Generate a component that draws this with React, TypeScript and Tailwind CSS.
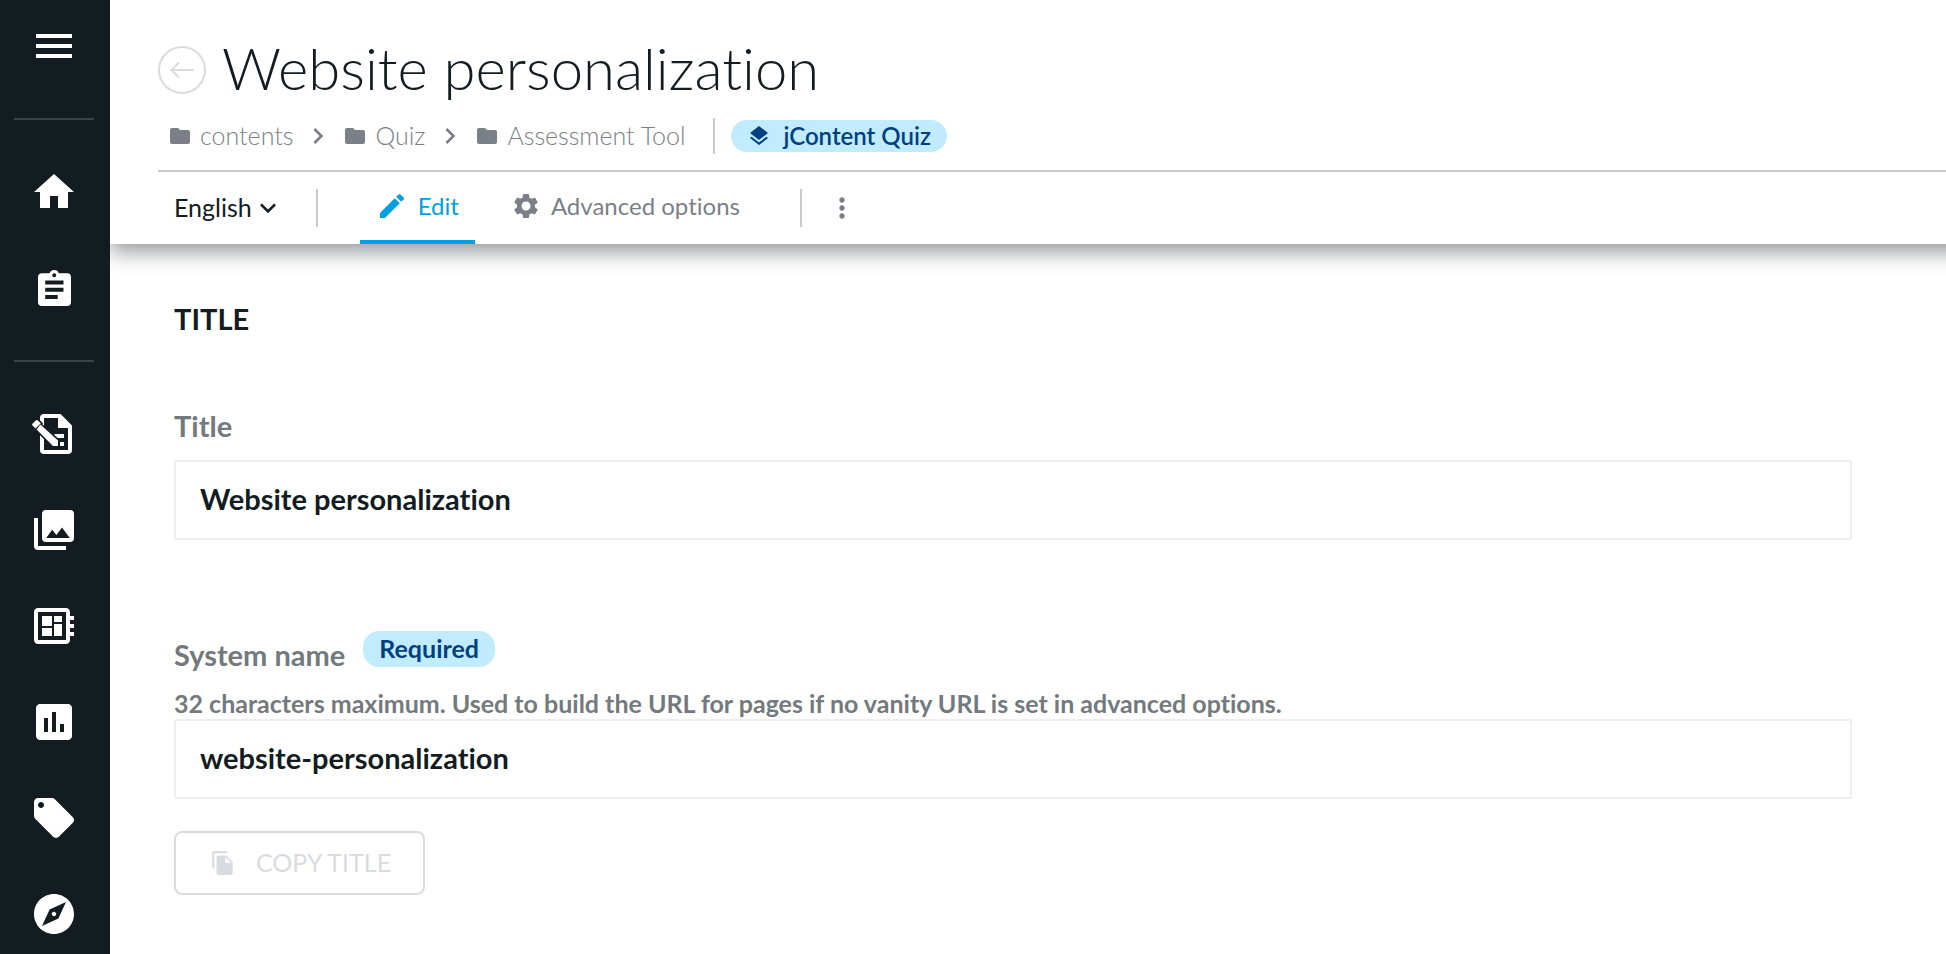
import type { ReactNode } from "react";
import {
  MdAssessment,
  MdChevronRight,
  MdDeveloperBoard,
  MdEdit,
  MdExpandMore,
  MdExplore,
  MdFileCopy,
  MdFolder,
  MdHome,
  MdLayers,
  MdMenu,
  MdMoreVert,
  MdSettings,
} from "react-icons/md";

function ClipboardIcon() {
  return (
    <svg viewBox="0 0 48 48" className="size-12" fill="currentColor" aria-hidden="true">
      <path
        fillRule="evenodd"
        d="M12 9.2h7.6a4.9 4.9 0 0 1 9.2 0H37a4 4 0 0 1 4 4V38a4 4 0 0 1-4 4H12a4 4 0 0 1-4-4V13.200a4 4 0 0 1 4-4zM24.200 9.300a2 2 0 1 0 0 4a2 2 0 0 0 0-4zM15.200 16.500v4h18.300v-4zM15.200 23.700v4h18.300v-4zM15.200 31v4h12.500v-4z"
      />
    </svg>
  );
}

function EditNoteIcon() {
  return (
    <svg viewBox="0 0 24 24" className="size-12" aria-hidden="true">
      <path
        fill="currentColor"
        fillRule="evenodd"
        d="M7 2h8.300L21 7.700V20a2 2 0 0 1-2 2H7a2 2 0 0 1-2-2V4a2 2 0 0 1 2-2zM7 4v16h12V9h-5V4z"
      />
      <path fill="currentColor" d="M12.200 12H17v2h-4.800zM15 16h2v2h-2z" />
      <path
        className="fill-white stroke-[#131c21]"
        strokeWidth="1.600"
        paintOrder="stroke"
        d="M5.200 7.300L14 15.200V18h-2.500L3.300 9.800zM3.400 5a1 1 0 0 1 .5.2L5.400 6.600L2.800 9.300L1.300 7.900a.8.8 0 0 1 0-1.100L2.900 5.200a1 1 0 0 1 .5-.2z"
      />
    </svg>
  );
}

function MediaIcon() {
  return (
    <svg viewBox="0 0 24 24" className="size-12" fill="currentColor" aria-hidden="true">
      <path d="M2 6v14a2 2 0 0 0 2 2h14v-2H4V6z" />
      <path
        fillRule="evenodd"
        d="M8 2h12a2 2 0 0 1 2 2v12a2 2 0 0 1-2 2H8a2 2 0 0 1-2-2V4a2 2 0 0 1 2-2zM8.100 16h11.800l-3.900-5.200l-2.800 3.700l-2.100-2.600z"
      />
    </svg>
  );
}

function TagIcon() {
  return (
    <svg viewBox="0 0 24 24" className="size-12" fill="currentColor" aria-hidden="true">
      <path d="M21.410 11.580l-9-9C12.050 2.220 11.550 2 11 2H4c-1.100 0-2 .9-2 2v7c0 .55.220 1.050.590 1.420l9 9c.360.360.860.580 1.410.580s1.050-.220 1.410-.590l7-7c.370-.360.590-.860.590-1.410s-.230-1.060-.590-1.420zM5.500 7C4.670 7 4 6.330 4 5.500S4.670 4 5.500 4 7 4.670 7 5.500 6.330 7 5.500 7z" />
    </svg>
  );
}

function ThinArrowLeft() {
  return (
    <svg viewBox="0 0 24 24" className="size-6" fill="none" stroke="currentColor" strokeWidth="2" aria-hidden="true">
      <path d="M24 12H2M9 4.500L1.500 12L9 19.500" />
    </svg>
  );
}

function NavItem({ label, children }: { label: string; children: ReactNode }) {
  return (
    <li>
      <a href="#" aria-label={label} className="flex h-24 items-center justify-center">
        {children}
      </a>
    </li>
  );
}

function Sidebar() {
  return (
    <nav
      aria-label="Main"
      className="sticky top-0 z-20 h-screen w-[110px] shrink-0 overflow-hidden bg-[#131c21] pr-0.5 text-white"
    >
      <button type="button" aria-label="Menu" className="flex h-[94px] w-full items-center justify-center pb-0.5">
        <MdMenu className="size-12" />
      </button>
      <hr className="mx-3.5 my-6 h-0.5 border-0 bg-[#3b4248]" />
      <ul>
        <NavItem label="Home">
          <MdHome className="size-12" />
        </NavItem>
        <NavItem label="Tasks">
          <ClipboardIcon />
        </NavItem>
      </ul>
      <hr className="mx-3.5 my-6 h-0.5 border-0 bg-[#3b4248]" />
      <ul>
        <NavItem label="Pages">
          <EditNoteIcon />
        </NavItem>
        <NavItem label="Media">
          <MediaIcon />
        </NavItem>
        <NavItem label="Components">
          <MdDeveloperBoard className="size-12" />
        </NavItem>
        <NavItem label="Reports">
          <MdAssessment className="size-12" />
        </NavItem>
        <NavItem label="Tags">
          <TagIcon />
        </NavItem>
        <NavItem label="Explore">
          <MdExplore className="size-12" />
        </NavItem>
      </ul>
    </nav>
  );
}

const trail = ["contents", "Quiz", "Assessment Tool"];

function Breadcrumb() {
  return (
    <nav aria-label="Breadcrumb" className="mt-4 flex h-9 items-center pl-2.5">
      <ol className="flex items-center text-[25px] font-light text-[#7b7f88]">
        {trail.map((name, i) => (
          <li key={name} className="flex items-center">
            {i > 0 && <MdChevronRight className="mx-[9px] size-8" />}
            <a href="#" className="flex items-center gap-2">
              <MdFolder className="size-6" />
              {name}
            </a>
          </li>
        ))}
      </ol>
      <span className="ml-7 mr-4 h-9 w-0.5 bg-[#c9c9cf]" />
      <span className="flex h-8 items-center gap-3 rounded-full bg-[#c1ecff] px-4 text-2xl font-semibold text-[#00407f]">
        <MdLayers className="size-6" />
        jContent Quiz
      </span>
    </nav>
  );
}

function Toolbar() {
  return (
    <div className="flex h-[74px] items-center border-t-2 border-[#c9c9cf] pl-4">
      <div className="relative flex items-center text-[25px] text-[#131c21]">
        <select aria-label="Language" className="field-sizing-content appearance-none bg-transparent pr-8 outline-none">
          <option>English</option>
        </select>
        <MdExpandMore className="pointer-events-none absolute right-0 size-8" />
      </div>
      <span className="ml-8 mr-[42px] h-[38px] w-0.5 bg-[#c9c9cf]" />
      <div role="tablist" className="flex gap-5 self-stretch text-2xl">
        <button
          type="button"
          role="tab"
          aria-selected="true"
          className="flex items-center gap-2.5 border-b-4 border-[#00a0e3] px-4 text-[#00a0e3]"
        >
          <MdEdit className="size-8" />
          Edit
        </button>
        <button
          type="button"
          role="tab"
          aria-selected="false"
          className="flex items-center gap-2.5 border-b-4 border-transparent px-4 text-[#7b7f88]"
        >
          <MdSettings className="size-[30px]" />
          Advanced options
        </button>
      </div>
      <span className="ml-11 mr-6 h-[38px] w-0.5 bg-[#c9c9cf]" />
      <button type="button" aria-label="More actions" className="text-[#7b7f88]">
        <MdMoreVert className="size-8" />
      </button>
    </div>
  );
}

function PageHeader() {
  return (
    <header className="relative z-10 -mr-6 bg-white pt-[38px] pl-12 shadow-[0_8px_20px_rgba(19,28,33,0.45)]">
      <div className="flex h-16 items-center gap-4">
        <button
          type="button"
          aria-label="Back"
          className="flex size-12 items-center justify-center rounded-full border-2 border-[#dadbe0] text-[#dadbe0]"
        >
          <ThinArrowLeft />
        </button>
        <h1 className="pb-1 text-[58px] leading-[60px] font-light text-[#131c21]">Website personalization</h1>
      </div>
      <Breadcrumb />
      <div className="h-4" />
      <Toolbar />
    </header>
  );
}

const inputClass =
  "h-20 w-full rounded-xs border-2 border-[#efefef] bg-white px-6 pb-1 text-[29px] font-bold text-[#131c21] outline-none";

function ContentForm() {
  return (
    <form className="pt-[55px] pr-[94px] pb-14 pl-16">
      <h2 className="text-[29px] leading-10 font-bold text-[#131c21]">TITLE</h2>
      <label htmlFor="title" className="mt-[67px] block text-[29px] leading-10 font-bold text-[#73797d]">
        Title
      </label>
      <input id="title" type="text" defaultValue="Website personalization" className={`mt-3.5 ${inputClass}`} />

      <div className="mt-[91px] flex items-start gap-[18px]">
        <label htmlFor="system-name" className="mt-1 text-[29px] leading-10 font-bold text-[#73797d]">
          System name
        </label>
        <span className="flex h-9 items-center rounded-2xl bg-[#c1ecff] px-4 text-[25px] font-bold text-[#00407f]">
          Required
        </span>
      </div>
      <p id="system-name-help" className="mt-3 text-[25px] leading-8 font-bold text-[#73797d]">
        32 characters maximum. Used to build the URL for pages if no vanity URL is set in advanced options.
      </p>
      <input
        id="system-name"
        type="text"
        maxLength={32}
        aria-describedby="system-name-help"
        defaultValue="website-personalization"
        className={inputClass}
      />
      <button
        type="button"
        disabled
        className="mt-8 flex h-16 items-center gap-5 rounded-lg border-2 border-[#dadbe0] pr-8 pl-[34px] text-[25px] text-[#dadbe0]"
      >
        <MdFileCopy className="size-[26px]" />
        COPY TITLE
      </button>
    </form>
  );
}

export default function App() {
  return (
    <div className="flex min-h-screen bg-white font-['Lato','Open_Sans',sans-serif] [font-variant-ligatures:none]">
      <Sidebar />
      <main className="min-w-0 flex-1 overflow-x-clip">
        <PageHeader />
        <ContentForm />
      </main>
    </div>
  );
}
